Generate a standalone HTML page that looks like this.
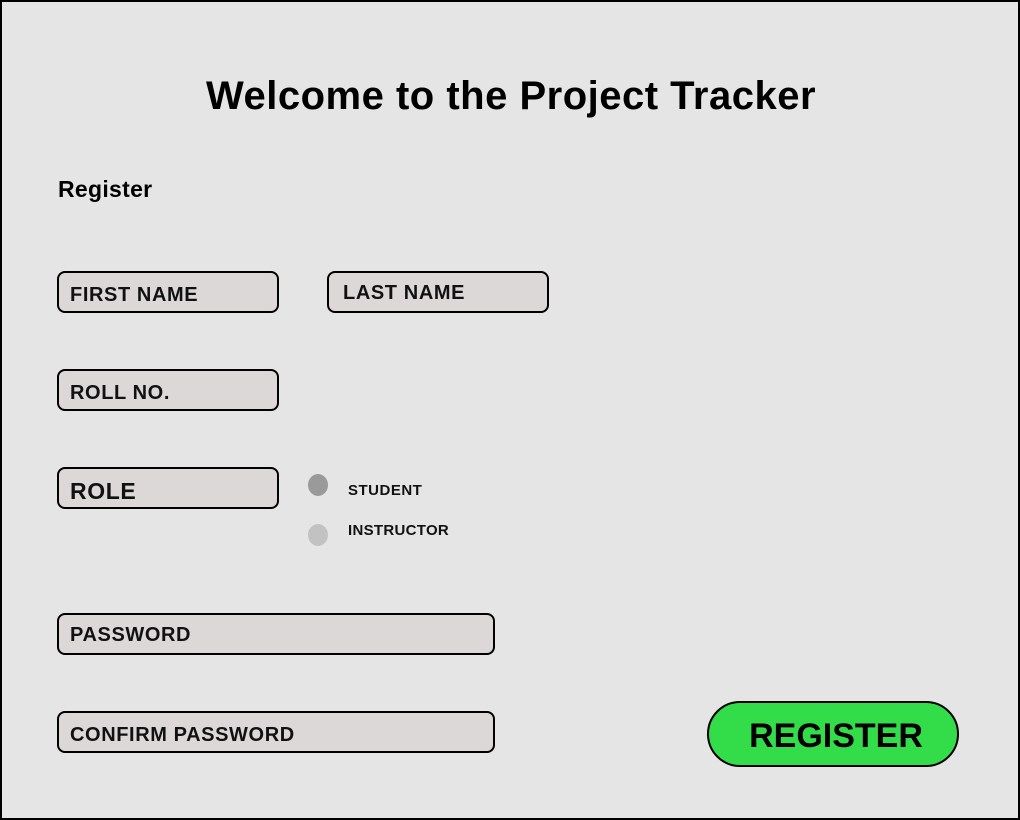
<!DOCTYPE html>
<html><head><style>
body{margin:0;width:1020px;height:820px;overflow:hidden;font-family:"Liberation Sans",sans-serif;}
.frame{position:absolute;left:0;top:0;width:1016px;height:816px;border:2px solid #000;background:#e5e5e5;}
.a{position:absolute;}
.box{position:absolute;box-sizing:border-box;border:2px solid #000;border-radius:8px;background:#ddd8d8;font-weight:bold;font-size:20px;letter-spacing:0.6px;color:#111;padding-left:11px;}
</style></head><body>
<div class="frame"></div>
<div class="a" style="left:0;width:1022px;top:74px;text-align:center;font-size:40px;letter-spacing:0.5px;font-weight:bold;color:#000">Welcome to the Project Tracker</div>
<div class="a" style="left:58px;top:176px;font-size:23px;font-weight:bold;letter-spacing:0.3px;color:#000">Register</div>
<div class="box" style="left:57px;top:271px;width:222px;height:42px;line-height:44px">FIRST NAME</div>
<div class="box" style="left:327px;top:271px;width:222px;height:42px;line-height:40px;padding-left:14px">LAST NAME</div>
<div class="box" style="left:57px;top:369px;width:222px;height:42px;line-height:44px">ROLL NO.</div>
<div class="box" style="left:57px;top:467px;width:222px;height:42px;line-height:44px;font-size:23px">ROLE</div>
<div class="a" style="left:308px;top:474px;width:20px;height:22px;border-radius:50%;background:#9a9a9a"></div>
<div class="a" style="left:308px;top:524px;width:20px;height:22px;border-radius:50%;background:#c2c2c2"></div>
<div class="a" style="left:348px;top:482px;font-size:15px;letter-spacing:0.5px;font-weight:bold;color:#111">STUDENT</div>
<div class="a" style="left:348px;top:522px;font-size:15px;letter-spacing:0.3px;font-weight:bold;color:#111">INSTRUCTOR</div>
<div class="box" style="left:57px;top:613px;width:438px;height:42px;line-height:40px">PASSWORD</div>
<div class="box" style="left:57px;top:711px;width:438px;height:42px;line-height:44px">CONFIRM PASSWORD</div>
<div class="a" style="left:707px;top:701px;width:252px;height:66px;box-sizing:border-box;border:2px solid #000;border-radius:33px;background:#33dd4a;text-align:center;line-height:66px;font-size:34px;font-weight:bold;color:#000;padding-left:6px">REGISTER</div>
</body></html>
